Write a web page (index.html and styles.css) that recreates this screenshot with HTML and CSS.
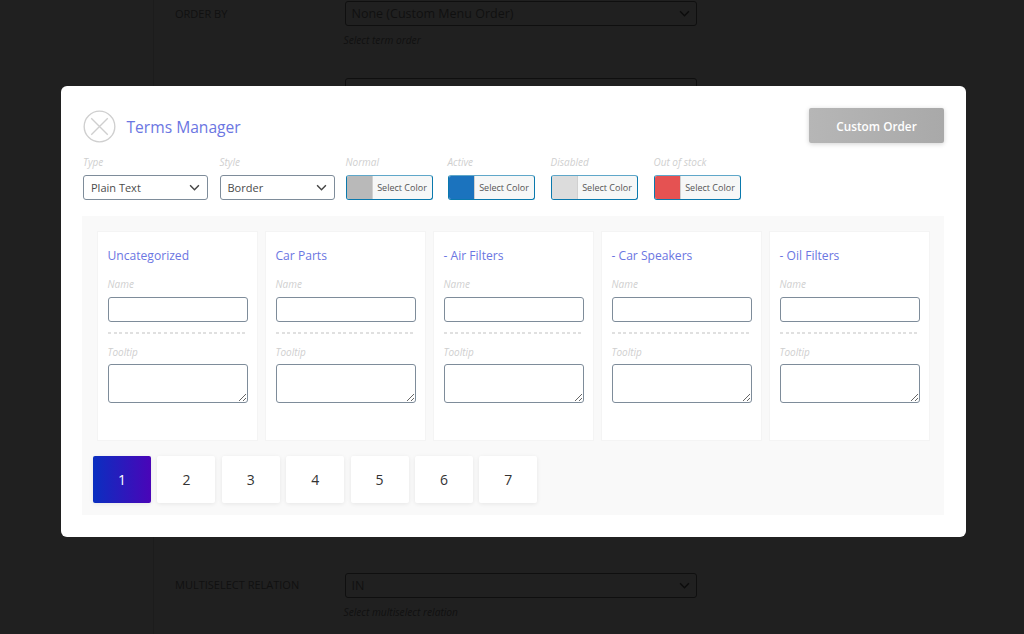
FILE: index.html
```html
<!DOCTYPE html>
<html lang="en">
<head>
<meta charset="utf-8">
<title>Terms Manager</title>
<link rel="stylesheet" href="styles.css">
</head>
<body>
<main class="page">
  <div class="form-row row-order">
    <div class="form-label">ORDER BY</div>
    <div class="form-field">
      <div class="bg-select"><span>None (Custom Menu Order)</span><svg class="chev" viewBox="0 0 10 6"><path d="M1 1l4 4 4-4"/></svg></div>
      <div class="bg-help">Select term order</div>
    </div>
  </div>
  <div class="form-row row-next">
    <div class="form-label"></div>
    <div class="form-field"><div class="bg-select"></div></div>
  </div>
  <div class="form-row row-multi">
    <div class="form-label">MULTISELECT RELATION</div>
    <div class="form-field">
      <div class="bg-select"><span>IN</span><svg class="chev" viewBox="0 0 10 6"><path d="M1 1l4 4 4-4"/></svg></div>
      <div class="bg-help">Select multiselect relation</div>
    </div>
  </div>
</main>

<section class="modal">
  <header class="modal-head">
    <div class="head-left">
      <svg class="close" viewBox="0 0 34 34"><circle cx="17" cy="17" r="15.8"/><path d="M8.5 8.5l17 17M25.5 8.5l-17 17"/></svg>
      <h1 class="modal-title">Terms Manager</h1>
    </div>
    <button class="order-btn">Custom Order</button>
  </header>

  <div class="toolbar">
    <div class="tool tool-type">
      <div class="cap">Type</div>
      <div class="select"><span>Plain Text</span><svg class="chev" viewBox="0 0 10 6"><path d="M1 1l4 4 4-4"/></svg></div>
    </div>
    <div class="tool tool-style">
      <div class="cap">Style</div>
      <div class="select"><span>Border</span><svg class="chev" viewBox="0 0 10 6"><path d="M1 1l4 4 4-4"/></svg></div>
    </div>
    <div class="tool tool-normal">
      <div class="cap">Normal</div>
      <div class="color"><span class="swatch sw-normal"></span><span class="color-text">Select Color</span></div>
    </div>
    <div class="tool tool-active">
      <div class="cap">Active</div>
      <div class="color"><span class="swatch sw-active"></span><span class="color-text">Select Color</span></div>
    </div>
    <div class="tool tool-disabled">
      <div class="cap">Disabled</div>
      <div class="color"><span class="swatch sw-disabled"></span><span class="color-text">Select Color</span></div>
    </div>
    <div class="tool">
      <div class="cap">Out of stock</div>
      <div class="color"><span class="swatch sw-out"></span><span class="color-text">Select Color</span></div>
    </div>
  </div>

  <div class="panel">
    <div class="cards">
      <article class="card">
        <h2 class="card-title">Uncategorized</h2>
        <div class="cap cap-name">Name</div>
        <input class="field field-input" type="text">
        <div class="dash"></div>
        <div class="cap cap-tip">Tooltip</div>
        <textarea class="field field-area"></textarea>
      </article>
      <article class="card">
        <h2 class="card-title">Car Parts</h2>
        <div class="cap cap-name">Name</div>
        <input class="field field-input" type="text">
        <div class="dash"></div>
        <div class="cap cap-tip">Tooltip</div>
        <textarea class="field field-area"></textarea>
      </article>
      <article class="card">
        <h2 class="card-title">- Air Filters</h2>
        <div class="cap cap-name">Name</div>
        <input class="field field-input" type="text">
        <div class="dash"></div>
        <div class="cap cap-tip">Tooltip</div>
        <textarea class="field field-area"></textarea>
      </article>
      <article class="card">
        <h2 class="card-title">- Car Speakers</h2>
        <div class="cap cap-name">Name</div>
        <input class="field field-input" type="text">
        <div class="dash"></div>
        <div class="cap cap-tip">Tooltip</div>
        <textarea class="field field-area"></textarea>
      </article>
      <article class="card">
        <h2 class="card-title">- Oil Filters</h2>
        <div class="cap cap-name">Name</div>
        <input class="field field-input" type="text">
        <div class="dash"></div>
        <div class="cap cap-tip">Tooltip</div>
        <textarea class="field field-area"></textarea>
      </article>
    </div>
    <nav class="pager">
      <a class="page-btn current">1</a>
      <a class="page-btn">2</a>
      <a class="page-btn">3</a>
      <a class="page-btn">4</a>
      <a class="page-btn">5</a>
      <a class="page-btn">6</a>
      <a class="page-btn">7</a>
    </nav>
  </div>
</section>
</body>
</html>
```

FILE: styles.css
```css
* { box-sizing: border-box; }
html, body { margin: 0; height: 100%; }
body {
  width: 1024px;
  height: 634px;
  overflow: hidden;
  background: #202020;
  font-family: "Open Sans", "Noto Sans", sans-serif;
  position: relative;
}

/* dimmed page behind the modal */
.page {
  margin-left: 153px;
  border-left: 1px solid #1c1c1c;
  height: 634px;
  padding-left: 21px;
  color: #101010;
}
.form-row { display: flex; }
.form-label { width: 169.5px; font-size: 11px; font-weight: 400; line-height: 14px; }
.bg-select {
  width: 352px;
  height: 25px;
  border: 1px solid #0f0f0f;
  border-radius: 3px;
  display: flex;
  align-items: center;
  justify-content: space-between;
  padding: 0 6px;
  font-size: 12.5px;
}
.bg-select .chev { stroke: #0c0c0c; }
.bg-help { font-size: 10.2px; font-style: italic; margin-top: 8px; margin-left: -1px; line-height: 13px; }
.row-order { padding-top: 1px; }
.row-order .form-label { padding-top: 6px; }
.row-next { margin-top: 31px; }
.row-multi { margin-top: 470px; }
.row-multi .form-label { padding-top: 5px; }

/* modal */
.modal {
  position: absolute;
  left: 61px;
  top: 86px;
  width: 905px;
  height: 451px;
  background: #fff;
  border-radius: 6px;
  padding: 22px 22px 22px 21px;
  display: flex;
  flex-direction: column;
}
.modal-head { display: flex; justify-content: space-between; align-items: flex-start; height: 35px; }
.head-left { display: flex; align-items: center; gap: 11px; height: 37px; padding-left: .5px; }
.close { width: 33px; height: 33px; fill: none; stroke: #cfcfcf; stroke-width: 1.4; }
.modal-title { margin: 0; font-size: 15.6px; font-weight: 500; color: #6b76e2; line-height: 20px; }
.order-btn {
  width: 135px;
  height: 35px;
  border: 0;
  border-radius: 2px;
  background: linear-gradient(90deg, #b6b6b6, #a9a9a9);
  box-shadow: 0 1px 5px rgba(0,0,0,.18);
  color: #fff;
  font-family: inherit;
  font-size: 11.8px;
  font-weight: 600;
  padding: 1px 0 0;
}

.toolbar { display: flex; margin-top: 13px; padding-left: 1px; }
.tool { display: flex; flex-direction: column; }
.tool-type { margin-right: 12px; }
.tool-style { margin-right: 11px; }
.tool-normal { margin-right: 15px; }
.tool-active, .tool-disabled { margin-right: 16px; }
.cap { font-size: 10px; font-style: italic; font-weight: 400; color: #cfcfcf; line-height: 13px; }
.tool .cap { margin-bottom: 6px; }
.select {
  height: 25px;
  border: 1px solid #7e8c9a;
  border-radius: 3px;
  display: flex;
  align-items: center;
  justify-content: space-between;
  padding: 0 7px;
  font-size: 11px;
  color: #4c4c4c;
}
.tool-type .select { width: 124.5px; }
.tool-style .select { width: 115px; }
.chev { width: 11px; height: 7px; fill: none; stroke: #444; stroke-width: 1.3; }
.color {
  width: 87px;
  height: 25px;
  display: flex;
  border: 1px solid #0a79ad;
  border-top-color: #5fa7c9;
  border-radius: 3px;
  overflow: hidden;
  background: #f6f7f7;
}
.swatch { width: 26px; border-right: 1px solid #d0d0d0; }
.sw-normal { background: #b9b9b9; }
.sw-active { background: #1b73be; }
.sw-disabled { background: #dcdcdc; }
.sw-out { background: #e55252; }
.color-text { flex: 1; text-align: center; font-size: 9px; line-height: 23px; color: #555; }

.panel {
  margin-top: 16px;
  height: 299px;
  width: 862px;
  background: #f9f9f9;
  padding: 15px 14px 0 14.5px;
}
.cards { display: flex; gap: 7px; }
.card {
  width: 161px;
  height: 210px;
  background: #fff;
  border: 1px solid #f4f4f4;
  padding: 0 0 0 10px;
  display: flex;
  flex-direction: column;
}
.card-title { margin: 16px 0 0; font-size: 12.1px; font-weight: 500; color: #6b76e2; line-height: 16px; }
.cap-name { margin-top: 14px; }
.field {
  display: block;
  background: #fff;
  border: 1px solid #7e8c9a;
  border-radius: 3px;
  margin: 0;
  outline: 0;
  padding: 0;
}
.field-input { width: 140px; height: 25px; margin: 6px 0 0 .5px; }
.dash {
  width: 140px;
  height: 2px;
  margin: 10px 0 0;
  background: repeating-linear-gradient(90deg, #e0e0e0 0 3px, transparent 3px 5.6px);
}
.cap-tip { margin-top: 12px; }
.field-area { width: 140px; height: 39px; margin-top: 5px; }

.pager { display: flex; margin: 15px 0 0 -3.5px; gap: 6.4px; }
.page-btn {
  width: 58px;
  height: 47px;
  background: #fff;
  border-radius: 2px;
  box-shadow: 0 1px 4px rgba(0,0,0,.08);
  display: flex;
  align-items: center;
  justify-content: center;
  font-size: 14px;
  font-weight: 500;
  color: #333;
}
.page-btn.current {
  background: linear-gradient(90deg, #0a2fc0, #4a05b8);
  color: #fff;
}
```
